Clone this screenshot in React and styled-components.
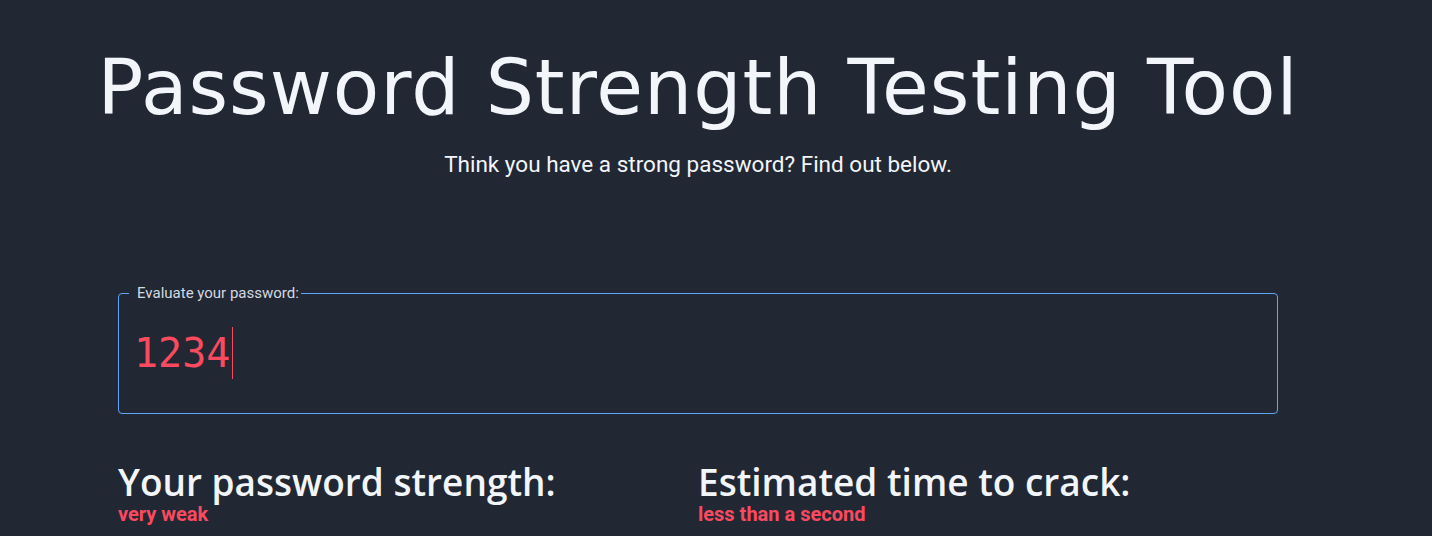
import React from 'react';
import styled, { createGlobalStyle } from 'styled-components';

const GlobalStyle = createGlobalStyle`
  html, body {
    margin: 0;
    padding: 0;
    background: #212733;
  }
  body {
    font-family: Roboto, "Liberation Sans", sans-serif;
    color: #f2f5f9;
  }
`;

const Page = styled.div`
  width: 1396px;
  height: 536px;
  overflow: hidden;
  display: flex;
  flex-direction: column;
  align-items: center;
`;

const Title = styled.h1`
  margin: 38px 0 0;
  font-family: "DejaVu Sans", sans-serif;
  font-weight: 400;
  font-size: 76px;
  line-height: 100px;
  letter-spacing: 1px;
  color: #f2f5f9;
`;

const Subtitle = styled.p`
  margin: 12px 0 0;
  font-size: 22.5px;
  line-height: 28px;
`;

const Main = styled.div`
  width: 1160px;
  margin-top: 106px;
`;

const Field = styled.fieldset`
  margin: 0;
  padding: 0 10px;
  height: 130px;
  border: 1px solid #60a5fa;
  border-radius: 4px;
  box-sizing: border-box;
  display: flex;
  align-items: center;
`;

const Legend = styled.legend`
  margin: 0;
  padding: 0 2px 0 8px;
  font-size: 15px;
  line-height: 18px;
  color: #d5d9e0;
`;

const Display = styled.div`
  display: flex;
  align-items: center;
  margin: -10px 0 0 5px;
  height: 52px;
  font-family: "DejaVu Sans Mono", monospace;
  font-size: 40px;
  color: #fb4a5f;
`;

const Caret = styled.span`
  width: 1px;
  height: 52px;
  margin-left: 2px;
  background: #fb4a5f;
`;

const Results = styled.div`
  display: grid;
  grid-template-columns: 1fr 1fr;
  margin-top: 47px;
`;

const Result = styled.div`
  display: flex;
  flex-direction: column;
`;

const Heading = styled.h2`
  margin: 0;
  font-family: "Open Sans", sans-serif;
  font-weight: 600;
  font-size: 37px;
  line-height: 42px;
  color: #f2f5f9;
`;

const Verdict = styled.span`
  font-size: 20px;
  font-weight: 700;
  line-height: 22px;
  color: #fb4a5f;
`;

export default function App() {
  return (
    <>
      <GlobalStyle />
      <Page>
        <Title>Password Strength Testing Tool</Title>
        <Subtitle>Think you have a strong password? Find out below.</Subtitle>
        <Main>
          <Field>
            <Legend>Evaluate your password:</Legend>
            <Display>
              1234
              <Caret />
            </Display>
          </Field>
          <Results>
            <Result>
              <Heading>Your password strength:</Heading>
              <Verdict>very weak</Verdict>
            </Result>
            <Result>
              <Heading>Estimated time to crack:</Heading>
              <Verdict>less than a second</Verdict>
            </Result>
          </Results>
        </Main>
      </Page>
    </>
  );
}
